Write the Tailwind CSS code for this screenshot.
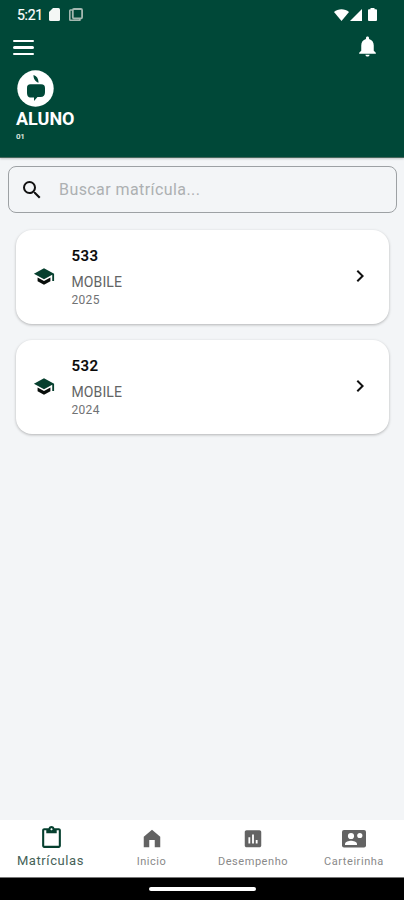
<!DOCTYPE html>
<html lang="pt-BR">
<head>
<meta charset="utf-8">
<meta name="viewport" content="width=device-width, initial-scale=1">
<title>Matrículas</title>
<script src="https://cdn.jsdelivr.net/npm/@tailwindcss/browser@4"></script>
</head>
<body class="bg-[#f3f5f7]">
<div class="flex h-[900px] w-[404px] flex-col overflow-hidden bg-[#f3f5f7] font-['Roboto',sans-serif]">
  <header class="h-[158px] shrink-0 border-b border-[#47675c] bg-[#004838] text-white shadow-[0_1px_2px_#0003]">
    <div class="flex h-[29px] items-center pl-[17px] pr-[27px]">
      <span class="w-8 text-[14px] leading-none tracking-[-0.3px] [-webkit-text-stroke:0.2px_white]">5:21</span>
      <svg class="h-[13px] w-[11px]" viewBox="0 0 11 13" fill="#f4f7f5"><path d="M4 0h5.500A1.500 1.500 0 0 1 11 1.500v10A1.500 1.500 0 0 1 9.500 13h-8A1.500 1.500 0 0 1 0 11.500V4z"/></svg>
      <svg class="ml-[9px] h-[13px] w-[14px]" viewBox="0 0 14 13" fill="none" stroke="#a3b8b0"><path d="M3 2H1.500A.8.800 0 0 0 .8 2.800v8.700a.8.800 0 0 0 .8.800h9.200V11" stroke-width="1.600"/><rect x="3.800" y="1" width="9.300" height="9.500" rx="1.200" stroke-width="1.800"/></svg>
      <svg class="ml-auto h-3 w-[15px]" viewBox="0 0 15 12" fill="white"><path d="M0 3C4-.8 11-.8 15 3L7.500 12z"/></svg>
      <svg class="ml-[1px] h-3 w-3" viewBox="0 0 12 12" fill="white"><path d="M12 0v12H0z"/></svg>
      <svg class="ml-[6px] h-[13px] w-[9px]" viewBox="0 0 9 13" fill="white"><path d="M2.500 0h4v1.300H8a1 1 0 0 1 1 1V12a1 1 0 0 1-1 1H1a1 1 0 0 1-1-1V2.300a1 1 0 0 1 1-1h1.500z"/></svg>
    </div>
    <div class="flex h-[37px] items-center justify-between pl-[13px] pr-6">
      <div class="flex flex-col gap-[4px]">
        <span class="h-[2.500px] w-[21px] rounded-full bg-white"></span>
        <span class="h-[2.500px] w-[21px] rounded-full bg-white"></span>
        <span class="h-[2.500px] w-[21px] rounded-full bg-white"></span>
      </div>
      <svg class="-mt-[2px] h-[25px] w-[25px]" viewBox="0 0 24 24" fill="white"><path d="M12 21.500c1.100 0 2-.7 2-1.700h-4c0 1 .89 1.700 2 1.700zm6-5.500v-5c0-3.070-1.640-5.640-4.500-6.320V4c0-.83-.67-1.500-1.500-1.500s-1.500.67-1.500 1.500v.68C7.630 5.360 6 7.920 6 11v5l-2 2v1h16v-1l-2-2z"/></svg>
    </div>
    <div class="pl-4 pt-1">
      <svg class="ml-[1px] h-[37px] w-[37px]" viewBox="0 0 37 37"><circle cx="18.500" cy="18.500" r="18.200" fill="white"/><path d="M16.500 5c2.900.8 5.200 3.500 5 7.800-3.300-1.200-5.200-4.200-5-7.800zM13.500 14.200h10.500c3 0 4 1.600 4 4v4c0 3-1.500 4.800-4.500 4.800h-3l-3.500 4v-3.500H14c-3 0-4-2-4-5V18c0-2.600 1-3.800 3.500-3.800z" fill="#004838"/></svg>
      <h1 class="mt-[2px] text-[18px] font-bold leading-[20px]">ALUNO</h1>
      <p class="mt-[3px] text-[8px] font-bold leading-[10px] tracking-[-0.3px] text-[#d7e2dd]">01</p>
    </div>
  </header>
  <main class="flex flex-1 flex-col pt-2">
    <div class="ml-2 flex h-[47px] w-[389px] items-center rounded-lg border border-[#9da1a4] pl-[11px]">
      <svg class="h-6 w-6" viewBox="0 0 24 24" fill="#111"><path d="M15.500 14h-.79l-.28-.27A6.471 6.471 0 0 0 16 9.500 6.500 6.500 0 1 0 9.500 16c1.610 0 3.090-.59 4.230-1.570l.27.28v.79l5 4.990L20.490 19l-4.990-5zm-6 0C7.010 14 5 11.990 5 9.500S7.010 5 9.500 5 14 7.010 14 9.500 11.990 14 9.500 14z"/></svg>
      <span class="ml-[15px] text-[16px] tracking-[0.42px] text-[#adb0b2]">Buscar matrícula...</span>
    </div>
    <div class="mt-[17px] flex flex-col gap-4 pl-4">
      <article class="flex h-[94px] w-[373px] items-center rounded-2xl bg-white pl-[17px] pr-[17px] shadow-[0_1px_3px_#0004]">
        <svg class="mb-[2px] h-[23px] w-[22px]" viewBox="0 0 24 24"><path d="M5 13.180v4L12 21l7-3.820v-4L12 17z" fill="#080e0b"/><path d="M12 3 1 9l11 6 9-4.910V17h2V9z" fill="#063f2e"/></svg>
        <div class="-mt-px ml-[16.500px] flex-1">
          <h2 class="text-[15px] font-medium leading-[20px] tracking-[0.5px] text-[#080808] [-webkit-text-stroke:0.2px_#080808]">533</h2>
          <p class="mt-[7px] text-[14px] leading-[18px] tracking-[0.1px] text-[#626465]">MOBILE</p>
          <p class="mt-[1px] text-[12px] leading-[16px] tracking-[0.3px] text-[#707274]">2025</p>
        </div>
        <svg class="mb-[2px] h-6 w-6" viewBox="0 0 24 24" fill="#111"><path d="M10 6 8.590 7.410 13.170 12l-4.580 4.590L10 18l6-6z"/></svg>
      </article>
      <article class="flex h-[94px] w-[373px] items-center rounded-2xl bg-white pl-[17px] pr-[17px] shadow-[0_1px_3px_#0004]">
        <svg class="mb-[2px] h-[23px] w-[22px]" viewBox="0 0 24 24"><path d="M5 13.180v4L12 21l7-3.820v-4L12 17z" fill="#080e0b"/><path d="M12 3 1 9l11 6 9-4.910V17h2V9z" fill="#063f2e"/></svg>
        <div class="-mt-px ml-[16.500px] flex-1">
          <h2 class="text-[15px] font-medium leading-[20px] tracking-[0.5px] text-[#080808] [-webkit-text-stroke:0.2px_#080808]">532</h2>
          <p class="mt-[7px] text-[14px] leading-[18px] tracking-[0.1px] text-[#626465]">MOBILE</p>
          <p class="mt-[1px] text-[12px] leading-[16px] tracking-[0.3px] text-[#707274]">2024</p>
        </div>
        <svg class="mb-[2px] h-6 w-6" viewBox="0 0 24 24" fill="#111"><path d="M10 6 8.590 7.410 13.170 12l-4.580 4.590L10 18l6-6z"/></svg>
      </article>
    </div>
  </main>
  <nav class="grid h-[58px] shrink-0 grid-cols-4 border-b border-[#777] bg-white">
    <div class="flex flex-col items-center pt-[5px] text-[#466257]">
      <svg class="ml-px h-[25px] w-[25px]" viewBox="0 0 24 24" fill="#06402f"><path d="M19 3h-4.180C14.400 1.840 13.300 1 12 1s-2.400.84-2.820 2H5c-1.100 0-2 .9-2 2v15c0 1.100.9 2 2 2h14c1.100 0 2-.9 2-2V5c0-1.100-.9-2-2-2zm-7 0c.55 0 1 .45 1 1s-.45 1-1 1-1-.45-1-1 .45-1 1-1zm7 17H5V5h2v3h10V5h2z"/></svg>
      <span class="mt-[3px] text-[13px] leading-[16px] tracking-[0.6px]">Matrículas</span>
    </div>
    <div class="flex flex-col items-center pt-[8px] text-[#898989]">
      <svg class="h-[22px] w-[22px]" viewBox="0 0 24 24" fill="#636363"><path d="M3 9.500 12 2l9 7.500V21h-6v-8H9v8H3z"/></svg>
      <span class="mt-[5px] text-[11px] leading-[14px] tracking-[0.500px]">Inicio</span>
    </div>
    <div class="flex flex-col items-center pt-[8px] text-[#898989]">
      <svg class="h-[22px] w-[22px]" viewBox="0 0 24 24" fill="#636363"><path d="M19 2.500H5c-1.100 0-2 .9-2 2v14.500c0 1.100.9 2 2 2h14c1.100 0 2-.9 2-2V4.500c0-1.100-.9-2-2-2zM9 17H7v-7h2v7zm4 0h-2V7h2v10zm4 0h-2v-4h2v4z"/></svg>
      <span class="mt-[5px] pl-px text-[11px] leading-[14px] tracking-[0.550px]">Desempenho</span>
    </div>
    <div class="flex flex-col items-center pt-[8px] text-[#898989]">
      <svg class="h-[22px] w-6" viewBox="0 0 24 22"><rect x="0" y="2" width="24" height="17.500" rx="2" fill="#636363"/><g fill="white"><circle cx="9" cy="8" r="3.100"/><path d="M3 17v-1c0-2.200 3.800-3.300 6-3.300s6 1.100 6 3.300v1z"/><circle cx="17.800" cy="7.500" r="2.600"/></g></svg>
      <span class="mt-[5px] pl-px text-[11px] leading-[14px] tracking-[0.550px]">Carteirinha</span>
    </div>
  </nav>
  <footer class="flex h-[22px] shrink-0 justify-center bg-black pt-[9px]"><div class="h-[4px] w-[107px] rounded-full bg-white"></div></footer>
</div>
</body>
</html>
